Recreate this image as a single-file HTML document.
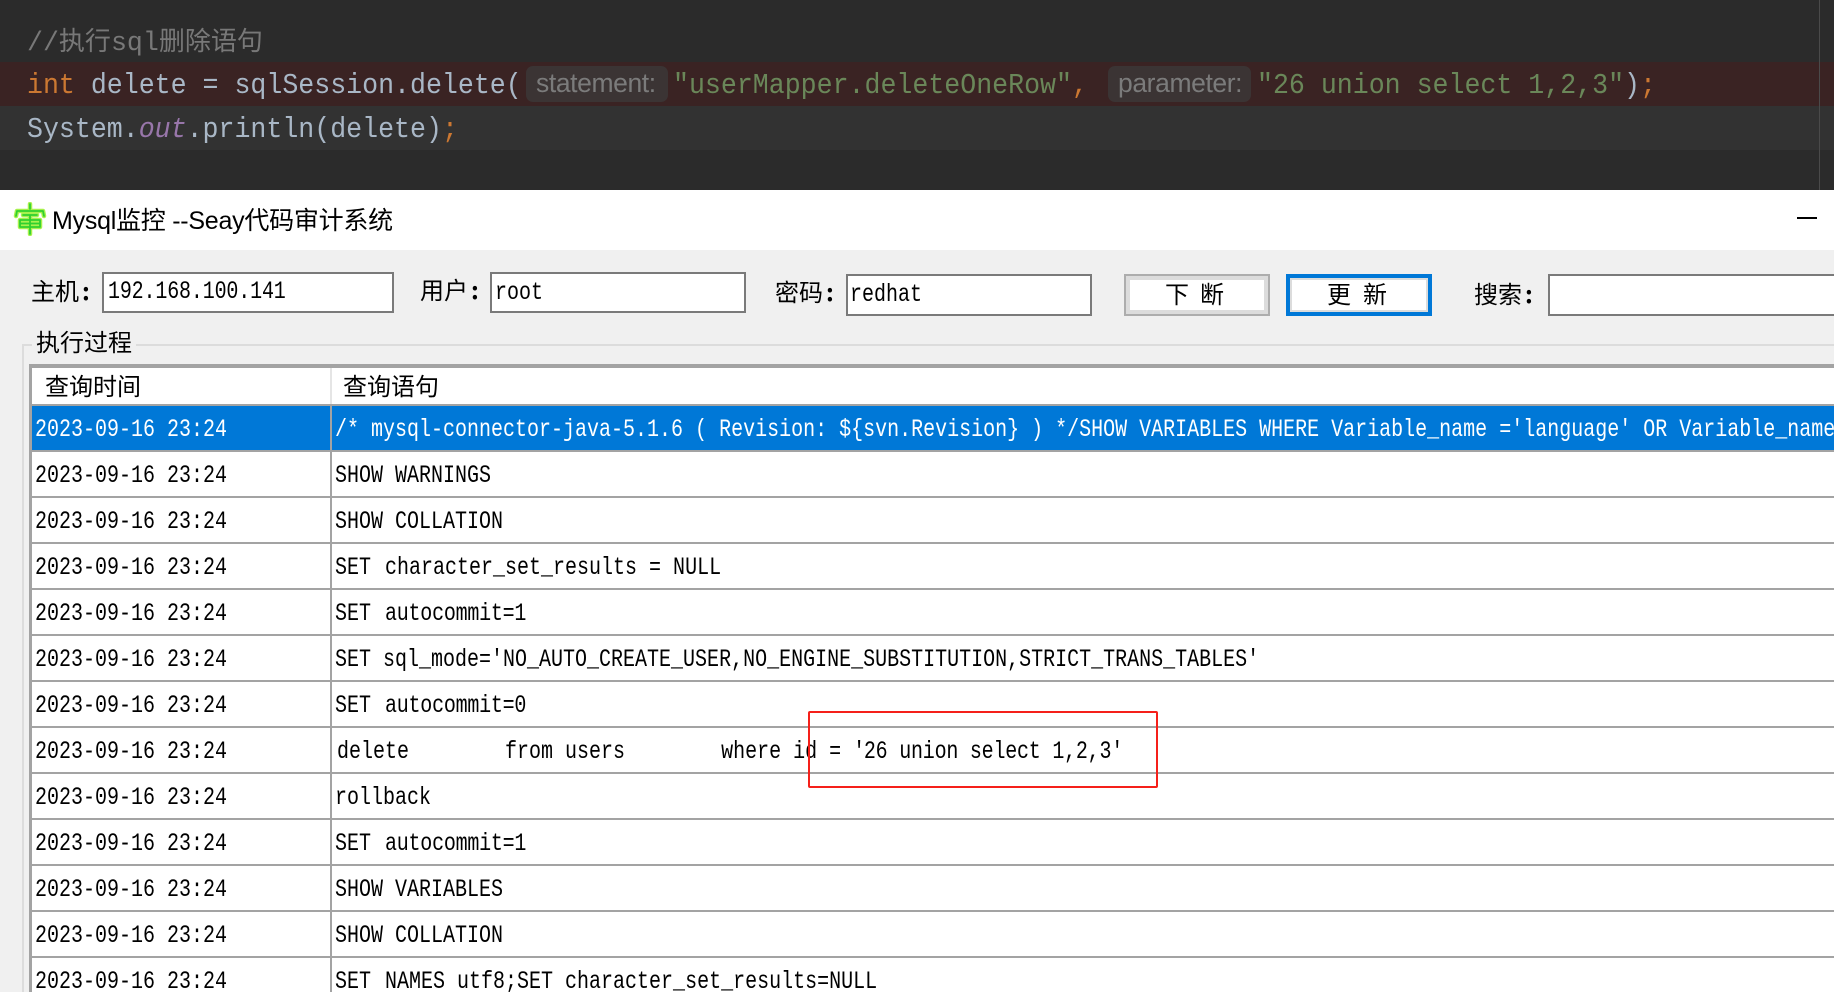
<!DOCTYPE html>
<html>
<head>
<meta charset="utf-8">
<style>
html,body{margin:0;padding:0;background:#f0f0f0;width:1834px;height:992px;overflow:hidden;}
#w{position:absolute;left:0;top:0;width:1834px;height:992px;overflow:hidden;background:#f0f0f0;}
#w div,#w svg{position:absolute;}
.code{font-family:"Liberation Mono","Noto Sans CJK SC",monospace;font-size:29px;line-height:44px;white-space:pre;color:#a9b7c6;height:44px;transform:scaleX(.917);transform-origin:0 0;}
.k{color:#cc7832}.s{color:#6a8759}
.inlay{background:#3b3434;border-radius:7px;top:66px;height:36px;color:#7b7b7b;font-family:"Liberation Sans",sans-serif;font-size:26.5px;line-height:35px;padding-left:10px;box-sizing:border-box;white-space:pre;letter-spacing:-.4px}
.m{font-family:"Liberation Mono","Noto Sans CJK SC",monospace;font-size:25px;line-height:30px;height:30px;white-space:pre;color:#000;transform:scaleX(.8);transform-origin:0 0;margin-top:1px;}
.l{height:2px;left:29px;width:1805px;background:#a3a3a3;}
.cj{font-family:"WenQuanYi Zen Hei","Noto Sans CJK SC",sans-serif;font-size:24px;line-height:30px;height:30px;white-space:pre;color:#000;}
.c{font-weight:bold;margin-left:3px}
.t{margin-right:2.5px}
.ac{letter-spacing:-.3px}
.inp{background:#fff;border:2px solid #7a7a7a;box-sizing:border-box;}
</style>
</head>
<body>
<div id="w">
<!-- editor -->
<div style="left:0;top:0;width:1834px;height:190px;background:#2b2b2b"></div>
<div style="left:0;top:62px;width:1834px;height:44px;background:#3a2323"></div>
<div style="left:0;top:106px;width:1834px;height:44px;background:#323232"></div>
<div style="left:1819px;top:0;width:1px;height:190px;background:#4a4a4a"></div>

<div class="code" style="left:27px;top:21px;color:#787878;font-size:26px;transform:none"><span style="font-size:26.6px">//</span>执行<span style="font-size:26.6px">sql</span>删除语句</div>
<div class="code" style="left:27px;top:64px"><span class="k">int</span> delete = sqlSession.delete(</div>
<div class="inlay" style="left:526px;width:142px">statement:</div>
<div class="code s" style="left:673px;top:64px">"userMapper.deleteOneRow"<span class="k">,</span></div>
<div class="inlay" style="left:1108px;width:143px">parameter:</div>
<div class="code s" style="left:1257px;top:64px">"26 union select 1,2,3"<span style="color:#a9b7c6">)</span><span class="k">;</span></div>
<div class="code" style="left:27px;top:108px">System.<span style="color:#9876aa;font-style:italic">out</span>.println(delete)<span class="k">;</span></div>

<!-- title bar -->
<div style="left:0;top:190px;width:1834px;height:60px;background:#fff"></div>
<svg style="left:13px;top:202px" width="34" height="34" viewBox="0 0 34 34" fill="none">
<g stroke="#9df03a" stroke-width="4.5" stroke-linejoin="round" stroke-linecap="round" opacity=".9">
<path d="M17 2V7M3 14L4 9H30L31 14M10 13H24M7 18H27V25H7ZM17 13V32M7 21.5H27"/>
</g>
<g stroke="#2fd02f" stroke-width="1.8" stroke-linejoin="round" stroke-linecap="round">
<path d="M17 2V7M3 14L4 9H30L31 14M10 13H24M7 18H27V25H7ZM17 13V32M7 21.5H27"/>
</g>
</svg>
<div style="left:52px;top:204px;height:34px;line-height:34px;font-size:25px;color:#000;white-space:pre;font-family:'Liberation Sans','Noto Sans CJK SC',sans-serif;letter-spacing:-.25px">Mysql监控 --Seay代码审计系统</div>
<div style="left:1797px;top:217px;width:20px;height:2px;background:#000"></div>

<!-- toolbar -->
<div class="cj" style="left:31px;top:275px">主机<span class="c">:</span></div>
<div class="inp" style="left:102px;top:272px;width:292px;height:41px"></div>
<div class="m" style="left:108px;top:276px;letter-spacing:-.2px">192.168.100.141</div>
<div class="cj" style="left:420px;top:274px">用户<span class="c">:</span></div>
<div class="inp" style="left:490px;top:272px;width:256px;height:41px"></div>
<div class="m" style="left:495px;top:277px">root</div>
<div class="cj" style="left:775px;top:276px">密码<span class="c">:</span></div>
<div class="inp" style="left:846px;top:274px;width:246px;height:42px"></div>
<div class="m" style="left:850px;top:279px">redhat</div>

<div style="left:1124px;top:274px;width:146px;height:42px;background:#fff;border:solid;border-color:#adadad;border-width:2px;box-sizing:border-box;box-shadow:inset 0 0 0 4px #dcdcdc"></div>
<div class="cj" style="left:1165px;top:278px">下</div>
<div class="cj" style="left:1200px;top:278px">断</div>
<div style="left:1286px;top:274px;width:146px;height:42px;background:#fff;border:4px solid #0078d7;box-sizing:border-box;box-shadow:inset 0 0 0 2px #dcdcdc"></div>
<div class="cj" style="left:1327px;top:278px">更</div>
<div class="cj" style="left:1363px;top:278px">新</div>

<div class="cj" style="left:1474px;top:278px">搜索<span class="c">:</span></div>
<div style="left:1548px;top:274px;width:286px;height:42px;background:#fff;border:2px solid #7a7a7a;border-right:none;box-sizing:border-box"></div>

<!-- group box -->
<div style="left:22px;top:344px;width:1812px;height:2px;background:#dcdcdc"></div>
<div style="left:22px;top:344px;width:2px;height:648px;background:#dcdcdc"></div>
<div style="left:32px;top:328px;width:104px;height:30px;background:#f0f0f0"></div>
<div class="cj" style="left:36px;top:326px">执行过程</div>

<!-- table -->
<div style="left:29px;top:364px;width:1805px;height:628px;background:#fff"></div>
<div style="left:29px;top:364px;width:1805px;height:4px;background:#a3a3a3"></div>
<div style="left:29px;top:364px;width:3px;height:628px;background:#a3a3a3"></div>
<div style="left:330px;top:368px;width:2px;height:36px;background:#e5e5e5"></div>
<div style="left:32px;top:406px;width:1802px;height:44px;background:#0078d7"></div>
<div style="left:330px;top:404px;width:2px;height:588px;background:#a3a3a3"></div>

<div class="l" style="top:404px"></div>
<div class="l" style="top:450px"></div>
<div class="l" style="top:496px"></div>
<div class="l" style="top:542px"></div>
<div class="l" style="top:588px"></div>
<div class="l" style="top:634px"></div>
<div class="l" style="top:680px"></div>
<div class="l" style="top:726px"></div>
<div class="l" style="top:772px"></div>
<div class="l" style="top:818px"></div>
<div class="l" style="top:864px"></div>
<div class="l" style="top:910px"></div>
<div class="l" style="top:956px"></div>

<div class="cj" style="left:45px;top:370px">查询时间</div>
<div class="cj" style="left:343px;top:370px">查询语句</div>

<div class="m" style="left:35px;top:414px;color:#fff">2023-09-16 23:24</div>
<div class="m" style="left:35px;top:460px">2023-09-16 23:24</div>
<div class="m" style="left:35px;top:506px">2023-09-16 23:24</div>
<div class="m" style="left:35px;top:552px">2023-09-16 23:24</div>
<div class="m" style="left:35px;top:598px">2023-09-16 23:24</div>
<div class="m" style="left:35px;top:644px">2023-09-16 23:24</div>
<div class="m" style="left:35px;top:690px">2023-09-16 23:24</div>
<div class="m" style="left:35px;top:736px">2023-09-16 23:24</div>
<div class="m" style="left:35px;top:782px">2023-09-16 23:24</div>
<div class="m" style="left:35px;top:828px">2023-09-16 23:24</div>
<div class="m" style="left:35px;top:874px">2023-09-16 23:24</div>
<div class="m" style="left:35px;top:920px">2023-09-16 23:24</div>
<div class="m" style="left:35px;top:966px">2023-09-16 23:24</div>

<div class="m" style="left:335px;top:414px;color:#fff">/* mysql-connector-java-5.1.6 ( Revision: ${svn.Revision} ) */SHOW VARIABLES WHERE Variable_name ='language' OR Variable_name</div>
<div class="m" style="left:335px;top:460px">SHOW WARNINGS</div>
<div class="m" style="left:335px;top:506px">SHOW COLLATION</div>
<div class="m" style="left:335px;top:552px"><span class="t">SET</span> character_set_results = NULL</div>
<div class="m" style="left:335px;top:598px"><span class="t">SET</span> <span class="ac">autocommit=1</span></div>
<div class="m" style="left:335px;top:644px">SET sql_mode='NO_AUTO_CREATE_USER,NO_ENGINE_SUBSTITUTION,STRICT_TRANS_TABLES'</div>
<div class="m" style="left:335px;top:690px"><span class="t">SET</span> <span class="ac">autocommit=0</span></div>
<div class="m" style="left:337px;top:736px">delete        from users        where id = <span style="letter-spacing:-1.5px">'</span><span style="letter-spacing:-.28px">26 union select 1,2,3</span><span style="letter-spacing:-4px">'</span></div>
<div class="m" style="left:335px;top:782px">rollback</div>
<div class="m" style="left:335px;top:828px"><span class="t">SET</span> <span class="ac">autocommit=1</span></div>
<div class="m" style="left:335px;top:874px">SHOW VARIABLES</div>
<div class="m" style="left:335px;top:920px">SHOW COLLATION</div>
<div class="m" style="left:335px;top:966px"><span class="t">SET</span> NAMES utf8;SET character_set_results=NULL</div>

<!-- red annotation -->
<div style="left:808px;top:711px;width:350px;height:77px;border:2.5px solid #f5201a;box-sizing:border-box;border-radius:2px"></div>
</div>
</body>
</html>
